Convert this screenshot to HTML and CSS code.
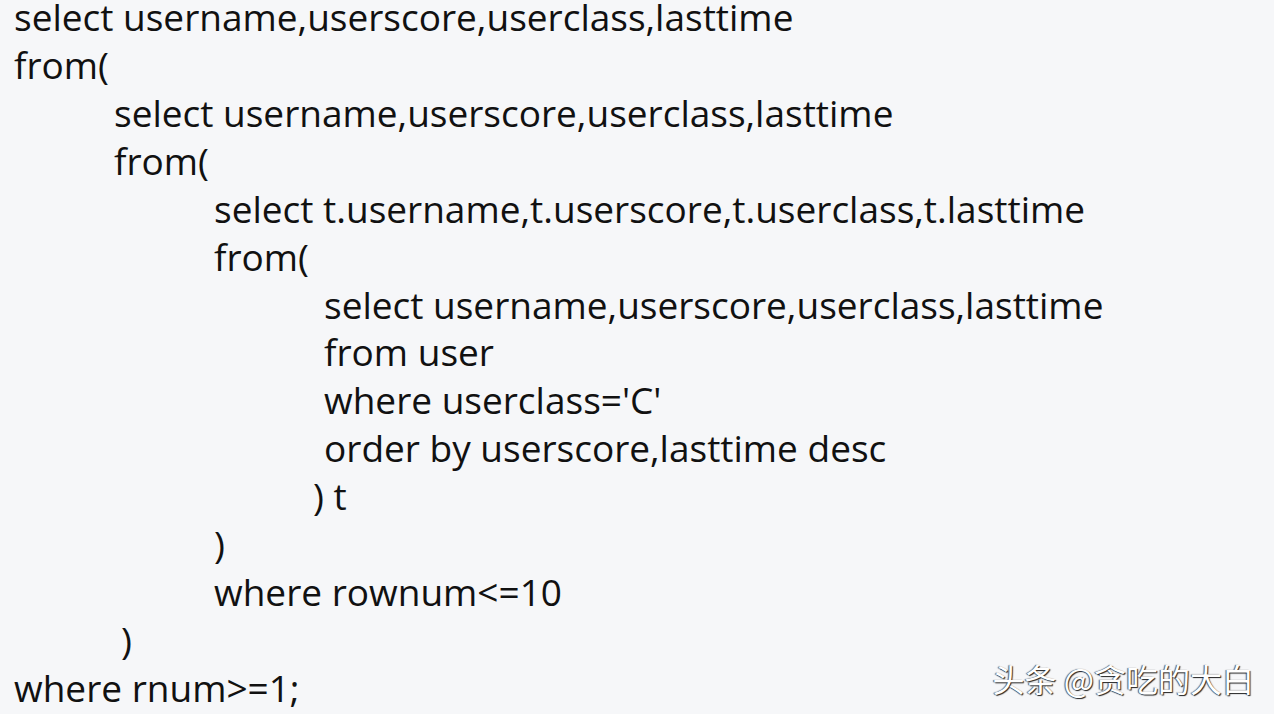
FILE: index.html
```html
<!DOCTYPE html>
<html lang="zh">
<head>
<meta charset="utf-8">
<link rel="stylesheet" href="styles.css">
</head>
<body>
<main class="code">
  <div class="line l0">select username,userscore,userclass,lasttime</div>
  <div class="line l0">from(</div>
  <div class="line l1">select username,userscore,userclass,lasttime</div>
  <div class="line l1">from(</div>
  <div class="line l2">select t.username,t.userscore,t.userclass,t.lasttime</div>
  <div class="line l2">from(</div>
  <div class="line l3">select username,userscore,userclass,lasttime</div>
  <div class="line l3">from user</div>
  <div class="line l3">where userclass='C'</div>
  <div class="line l3">order by userscore,lasttime desc</div>
  <div class="line l3b">) t</div>
  <div class="line l2">)</div>
  <div class="line l2">where rownum&lt;=10</div>
  <div class="line l1b">)</div>
  <div class="line l0">where rnum&gt;=1;</div>
</main>
<div class="watermark">头条 @贪吃的大白</div>
</body>
</html>
```
FILE: styles.css
```css
html, body {
  margin: 0;
  padding: 0;
  background: #f6f7f9;
  width: 1274px;
  height: 714px;
  overflow: hidden;
}
.code {
  display: flex;
  flex-direction: column;
  gap: 13.93px;
  padding-top: 0;
  font-family: "Open Sans", "Noto Sans", sans-serif;
  font-size: 37px;
  line-height: 34px;
  color: #111;
  white-space: pre;
}
.line { padding-left: 14px; }
.l1 { padding-left: 114px; }
.l1b { padding-left: 121px; }
.l2 { padding-left: 214px; }
.l3 { padding-left: 324px; }
.l3b { padding-left: 313px; }
.watermark {
  position: absolute;
  right: 20px;
  bottom: 16px;
  font-family: "Noto Sans CJK SC", sans-serif;
  font-size: 32px;
  line-height: 40px;
  color: #fff;
  text-shadow: 1px 1px 1px #222, -1px 0 1px #555;
}
```
